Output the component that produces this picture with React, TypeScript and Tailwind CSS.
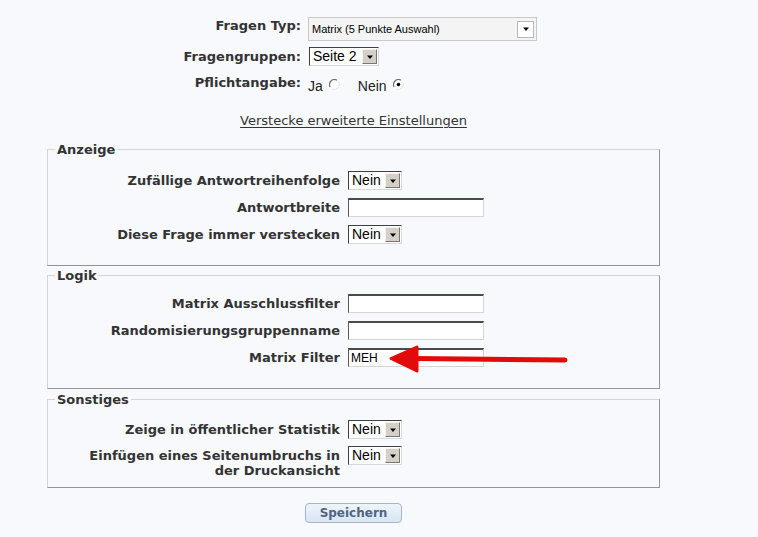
import React from "react";

const labelCls = "text-right font-bold text-[13px] leading-[15px] text-[#333]";

function Arrow() {
	return (
		<svg width="10" height="8" viewBox="0 0 10 8" className="block">
			<path d="M2 2.5h6L5 6z" fill="#000" />
		</svg>
	);
}

function ClassicSelect({ value, width }: { value: string; width: number }) {
	return (
		<div
			className="flex h-[19px] items-stretch bg-white border border-t-[#404040] border-l-[#404040] border-b-[#d8d8d8] border-r-[#d8d8d8]"
			style={{ width }}
		>
			<span className="flex-1 pl-[3px] text-[14px] leading-[17px] text-black font-['Liberation_Sans',Arial,sans-serif]">
				{value}
			</span>
			<span className="m-[1px] flex w-[15px] items-center justify-center bg-[#d4d0c8] border border-t-[#f4f2ee] border-l-[#f4f2ee] border-b-[#7a7770] border-r-[#7a7770]">
				<Arrow />
			</span>
		</div>
	);
}

function TextInput({ value = "" }: { value?: string }) {
	return (
		<div className="h-[19px] w-[136px] bg-white border-t-2 border-l border-t-[#4a4a4a] border-l-[#5a5a5a] border-b border-r border-b-[#d4d4d4] border-r-[#d4d4d4] pl-[2px] text-[12px] leading-[16px] text-black font-['Liberation_Sans',Arial,sans-serif]">
			{value}
		</div>
	);
}

function Radio({ checked }: { checked?: boolean }) {
	return (
		<svg width="11" height="11" viewBox="0 0 11 11" className="inline-block">
			<circle cx="5.5" cy="5.5" r="5" fill="#fff" />
			<path d="M1.2 8A5 5 0 0 1 8 1.2" fill="none" stroke="#707070" strokeWidth="1.2" />
			<path d="M9.8 3A5 5 0 0 1 3 9.8" fill="none" stroke="#e4e4e4" strokeWidth="1" />
			{checked && <circle cx="5.5" cy="5.5" r="1.8" fill="#000" />}
		</svg>
	);
}

function Section({
	title,
	children,
	className = "",
}: {
	title: string;
	children: React.ReactNode;
	className?: string;
}) {
	return (
		<fieldset
			className={`border border-t-[#d0d4dc] border-l-[#d0d4dc] border-b-[#8e939c] border-r-[#8e939c] ${className}`}
		>
			<legend className="ml-[7px] px-[2px] font-bold text-[13px] leading-[15px] text-[#333]">
				{title}
			</legend>
			{children}
		</fieldset>
	);
}

function Row({
	label,
	children,
}: {
	label: React.ReactNode;
	children: React.ReactNode;
}) {
	return (
		<div className="flex items-start gap-[8px]">
			<div className={`w-[292px] pt-[2px] ${labelCls}`}>{label}</div>
			{children}
		</div>
	);
}

export default function App() {
	return (
		<div className="relative min-h-[537px] w-full bg-[#f7f9fd] font-['DejaVu_Sans',Verdana,sans-serif]">
			<div className="ml-[47px] w-[613px] pt-[17px]">
				{/* Frage settings */}
				<div className="flex flex-col gap-[6px]">
					<div className="flex items-start gap-[7px]">
						<div className={`w-[254px] pt-[1px] ${labelCls}`}>Fragen Typ:</div>
						<div className="flex h-[24px] w-[229px] items-center justify-between border border-[#c9c9c9] bg-[#f4f4f4] pl-[3px] pr-[2px]">
							<span className="text-[11px] text-black font-['Liberation_Sans',Arial,sans-serif]">
								Matrix (5 Punkte Auswahl)
							</span>
							<span className="flex h-[17px] w-[17px] items-center justify-center border border-[#b8b8b8] bg-white">
								<Arrow />
							</span>
						</div>
					</div>
					<div className="flex items-start gap-[8px]">
						<div className={`w-[254px] pt-[2px] ${labelCls}`}>Fragengruppen:</div>
						<ClassicSelect value="Seite 2" width={70} />
					</div>
					<div className="flex items-start gap-[7px]">
						<div className={`w-[254px] pt-[3px] ${labelCls}`}>Pflichtangabe:</div>
						<div className="flex items-center text-[14px] text-[#222] font-['Liberation_Sans',Arial,sans-serif]">
							<span className="pt-[4px]">Ja</span>
							<span className="ml-[6px] -mt-[2px]">
								<Radio />
							</span>
							<span className="ml-[18px] pt-[4px]">Nein</span>
							<span className="ml-[6px] -mt-[2px]">
								<Radio checked />
							</span>
						</div>
					</div>
				</div>

				<div className="mt-[11px] text-center">
					<a className="text-[13px] text-[#333] underline underline-offset-2">
						Verstecke erweiterte Einstellungen
					</a>
				</div>

				<Section title="Anzeige" className="mt-[10px] pb-[21px]">
					<div className="flex flex-col gap-[8px] pt-[14px]">
						<Row label="Zufällige Antwortreihenfolge">
							<ClassicSelect value="Nein" width={54} />
						</Row>
						<Row label="Antwortbreite">
							<TextInput />
						</Row>
						<Row label="Diese Frage immer verstecken">
							<ClassicSelect value="Nein" width={54} />
						</Row>
					</div>
				</Section>

				<Section title="Logik" className="mt-[2px] pb-[21px]">
					<div className="flex flex-col gap-[8px] pt-[11px]">
						<Row label="Matrix Ausschlussfilter">
							<TextInput />
						</Row>
						<Row label="Randomisierungsgruppenname">
							<TextInput />
						</Row>
						<Row label="Matrix Filter">
							<TextInput value="MEH" />
						</Row>
					</div>
				</Section>

				<Section title="Sonstiges" className="mt-[3px] pb-[9px]">
					<div className="flex flex-col gap-[7px] pt-[13px]">
						<Row label="Zeige in öffentlicher Statistik">
							<ClassicSelect value="Nein" width={54} />
						</Row>
						<Row
							label={
								<>
									Einfügen eines Seitenumbruchs in
									<br />
									der Druckansicht
								</>
							}
						>
							<ClassicSelect value="Nein" width={54} />
						</Row>
					</div>
				</Section>

				<div className="mt-[15px] flex justify-center">
					<button className="h-[20px] w-[97px] rounded-[4px] border border-[#a3b6cc] bg-gradient-to-b from-[#eef4fb] to-[#d9e5f2] text-[12px] font-bold text-[#4d6585]">
						Speichern
					</button>
				</div>
			</div>

			{/* annotation arrow */}
			<svg
				className="pointer-events-none absolute left-[386px] top-[344px]"
				width="184"
				height="30"
				viewBox="0 0 184 30"
			>
				<line x1="28" y1="14.5" x2="179" y2="16" stroke="#e20a0a" strokeWidth="5" strokeLinecap="round" />
				<path d="M5 14.5 L31 3 L31 27 Z" fill="#e20a0a" stroke="#e20a0a" strokeWidth="3" strokeLinejoin="round" />
			</svg>
		</div>
	);
}
